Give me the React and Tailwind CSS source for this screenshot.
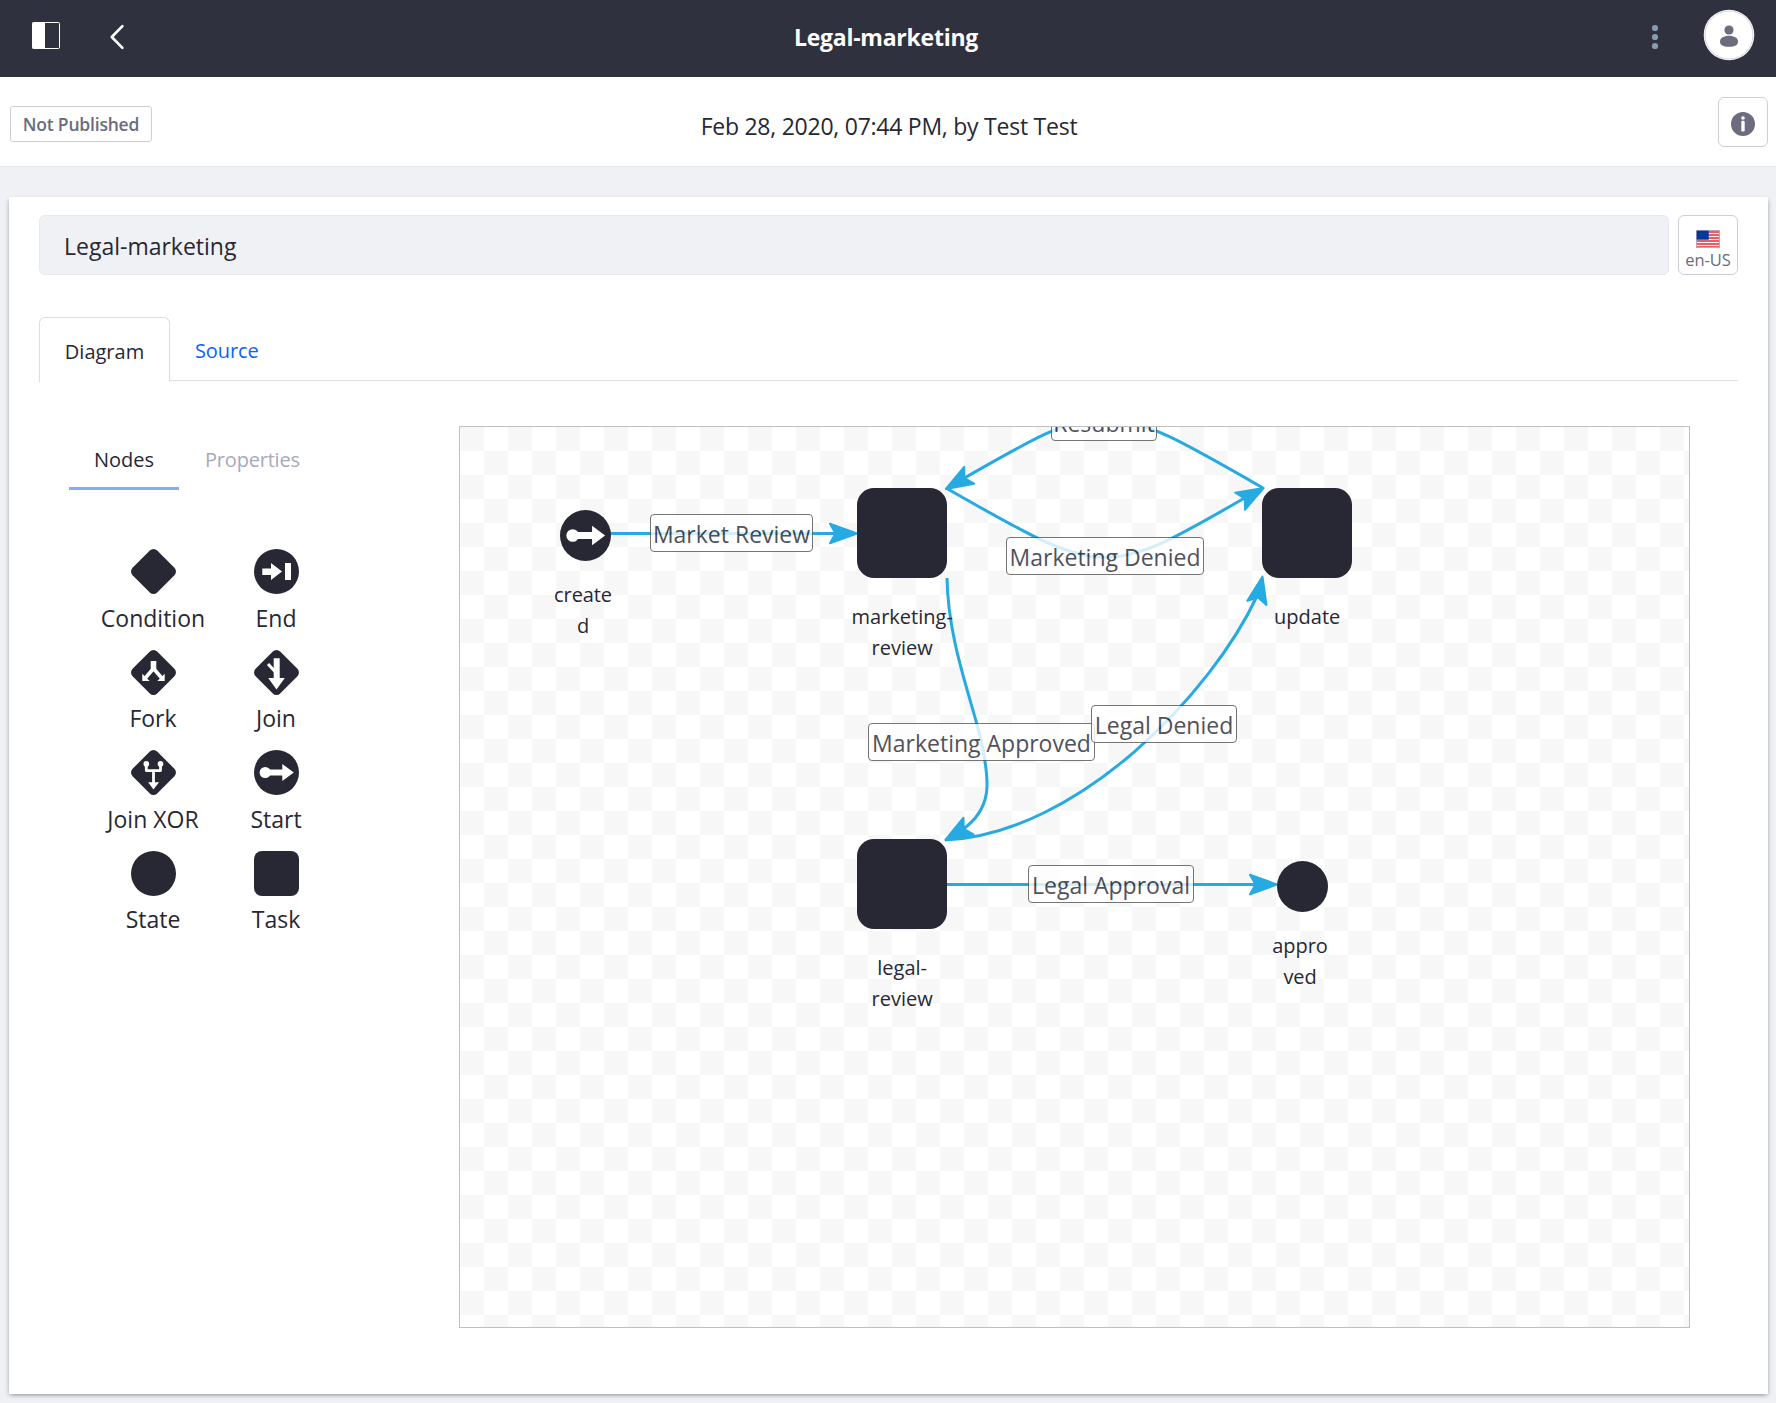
const INK = "#272833";

function Diamond() {
  return (
    <rect x="5.1" y="5.1" width="34.8" height="34.8" rx="5.2" transform="rotate(45 22.5 22.5)" fill={INK} />
  );
}

function Disc() {
  return <circle cx="22.5" cy="22.5" r="22.5" fill={INK} />;
}

function StartGlyph() {
  return (
    <g fill="#fff">
      <circle cx="11.2" cy="22.5" r="5.6" />
      <path d="M14 19.4H28.3V14L39.8 22.5L28.3 31V25.5H14Z" />
    </g>
  );
}

const shapes = {
  condition: <Diamond />,
  end: (
    <>
      <Disc />
      <path fill="#fff" d="M8.3 19.5H17V14L28 22.5L17 31V26H8.3ZM31 14H37V31H31Z" />
    </>
  ),
  fork: (
    <>
      <Diamond />
      <path fill="#fff" d="M19.7 11H25.3V20.2H19.7ZM11.3 23.7V31H18.7ZM33.7 23.7V31H26.3Z" />
      <path d="M22.5 17.5V18.5L14.3 28M22.5 18.5L30.7 28" fill="none" stroke="#fff" strokeWidth="3.6" />
    </>
  ),
  join: (
    <>
      <Diamond />
      <path fill="#fff" d="M19.7 8.3H25.7V28H30.8L22.5 39.4L14.2 28H19.7Z" />
      <path d="M14 14L21.5 22" fill="none" stroke="#fff" strokeWidth="3" />
    </>
  ),
  xor: (
    <>
      <Diamond />
      <circle cx="15.3" cy="13.9" r="2.8" fill="#fff" />
      <circle cx="29.5" cy="13.9" r="2.8" fill="#fff" />
      <path d="M15.3 14V20.6H29.5V14M22.5 20.6V33" fill="none" stroke="#fff" strokeWidth="2.8" strokeLinejoin="round" />
      <path fill="#fff" d="M17.1 32.2H28L22.5 39.5Z" />
    </>
  ),
  start: (
    <>
      <Disc />
      <StartGlyph />
    </>
  ),
  state: <Disc />,
  task: <rect width="45" height="45" rx="8" fill={INK} />,
};

const palette = [
  ["condition", "Condition"],
  ["end", "End"],
  ["fork", "Fork"],
  ["join", "Join"],
  ["xor", "Join XOR"],
  ["start", "Start"],
  ["state", "State"],
  ["task", "Task"],
];

function NavBar() {
  return (
    <nav className="grid h-[77px] grid-cols-[1fr_auto_1fr] items-start bg-[#30313f] pl-[17px] pr-[21px] text-white">
      <div className="flex pl-[15px] pt-[22px]">
        <svg width="28" height="27" viewBox="0 0 28 27">
          <rect x="0.5" y="0.5" width="27" height="26" rx="1" fill="none" stroke="#fff" />
          <path d="M0.5 0.5H13V26.5H0.5Z" fill="#fff" />
        </svg>
        <svg className="ml-[49px] mt-[2px]" width="16" height="26" viewBox="0 0 16 26" fill="none" stroke="#fff" strokeWidth="2.6" strokeLinecap="round" strokeLinejoin="round">
          <path d="M13.4 2.2L2.8 13L13.4 23.8" />
        </svg>
      </div>
      <h1 className="text-[23px] font-bold leading-[74px] tracking-[-0.25px]">Legal-marketing</h1>
      <div className="flex items-start justify-end pt-[9px]">
        <svg className="mr-[44px] mt-[15px]" width="8" height="26" viewBox="0 0 8 26" fill="#869cad">
          <circle cx="4" cy="4" r="3.1" />
          <circle cx="4" cy="13" r="3.1" />
          <circle cx="4" cy="22" r="3.1" />
        </svg>
        <svg width="52" height="52" viewBox="0 0 52 52">
          <circle cx="26" cy="26" r="25.3" fill="#fff" />
          <circle cx="26" cy="26" r="24" fill="none" stroke="#cdced9" strokeWidth="0.9" />
          <circle cx="26" cy="21" r="4.6" fill="#6b6c7e" />
          <path d="M17 32.5C17 29 21 26.8 26 26.8S35 29 35 32.5C35 36.3 32 37.7 26 37.7S17 36.3 17 32.5Z" fill="#6b6c7e" />
        </svg>
      </div>
    </nav>
  );
}

function InfoBar() {
  return (
    <header className="grid h-[90px] grid-cols-[1fr_auto_1fr] items-start border-b border-[#e7e7ed] bg-white pl-[10px] pr-2">
      <div className="mt-[29px] h-[36px] w-[142px] rounded-[3px] border border-[#cdced9] text-center text-[17.5px] font-semibold leading-[35px] tracking-[-0.2px] text-[#6b6c7e]">
        Not Published
      </div>
      <p className="pt-[20px] text-[23px] leading-[58px] tracking-[-0.25px]">Feb 28, 2020, 07:44 PM, by Test Test</p>
      <div className="mt-[20px] flex h-[50px] w-[50px] items-center justify-center justify-self-end rounded-md border border-[#cdced9]">
        <svg className="mt-[4px]" width="24" height="24" viewBox="0 0 24 24">
          <circle cx="12" cy="12" r="12" fill="#6b6c7e" />
          <circle cx="12" cy="6" r="1.8" fill="#fff" />
          <rect x="10.3" y="8.8" width="3.4" height="10.8" rx="1.3" fill="#fff" />
        </svg>
      </div>
    </header>
  );
}

function Flag() {
  return (
    <svg width="24" height="18" viewBox="0 0 24 18">
      <rect width="24" height="18" fill="#f6eef0" />
      <path d="M1 2H23M1 5H23M1 8H23M1 11H23M1 14H23M1 17H23" stroke="#e03238" strokeWidth="1.3" />
      <rect x="0.5" y="0.5" width="23" height="17" fill="none" stroke="#b4a9b4" />
      <rect x="0.7" y="0.7" width="12" height="9" fill="#0038a0" />
    </svg>
  );
}

function Arrow({ x, y, angle }) {
  return (
    <path
      d="M-1 0L-28 -9.8L-22.5 0L-28 9.8Z"
      transform={`translate(${x} ${y}) rotate(${angle})`}
      fill="#27aae1"
      strokeWidth="2"
    />
  );
}

function Connectors() {
  return (
    <svg className="absolute left-0 top-0" width="1229" height="900" viewBox="460 427 1229 900" fill="none" stroke="#27aae1" strokeWidth="3" strokeLinejoin="round">
      <path d="M610 533.5H840" />
      <Arrow x="858" y="533.5" angle="0" />
      <path d="M1263 488C1105 397 1105 397 961 480" />
      <Arrow x="945" y="489.5" angle="149.5" />
      <path d="M946 488C1105 579 1105 579 1248 496" />
      <Arrow x="1264.5" y="487.5" angle="-29.5" />
      <path d="M947 578C948 640 970 694 981 740C990 782 993 808 962 830" />
      <Arrow x="944.5" y="840.5" angle="149" />
      <path d="M945 840C1078 834 1212 693 1257 596" />
      <Arrow x="1262.7" y="575.5" angle="-78" />
      <path d="M946 884.5H1260" />
      <Arrow x="1278" y="884.5" angle="0" />
    </svg>
  );
}

function EdgeLabel({ place, children }) {
  return (
    <div className={`absolute h-[38px] whitespace-nowrap rounded-[4px] border border-[#555] bg-white text-center text-[23px] leading-[39px] opacity-80 ${place}`}>
      {children}
    </div>
  );
}

function TaskNode({ place, lines }) {
  return (
    <div className={`absolute flex w-[90px] flex-col items-center ${place}`}>
      <div className="h-[90px] w-[90px] shrink-0 rounded-[17px] bg-[#272833]" />
      <div className="ml-px mt-[23px] whitespace-nowrap text-center text-[20px] leading-[31.5px]">
        {lines.map((line) => (
          <div key={line}>{line}</div>
        ))}
      </div>
    </div>
  );
}

function StateNode({ place, lines, start }) {
  return (
    <div className={`absolute flex w-[51px] flex-col items-center ${place}`}>
      <svg width="51" height="51" viewBox="0 0 45 45">
        <Disc />
        {start && <StartGlyph />}
      </svg>
      <div className="-ml-[4px] mt-[18px] whitespace-nowrap text-center text-[20px] leading-[31px] tracking-[-0.1px]">
        {lines.map((line) => (
          <div key={line}>{line}</div>
        ))}
      </div>
    </div>
  );
}

function Canvas() {
  return (
    <div className="relative h-[902px] w-[1231px] overflow-hidden border border-[#c0c0c0] bg-white bg-[conic-gradient(#fff_25%,#f7f7f7_0_50%,#fff_0_75%,#f7f7f7_0)] bg-[size:48px_48px]">
      <Connectors />
      <StateNode place="left-[99.5px] top-[82.5px]" lines={["create", "d"]} start />
      <TaskNode place="left-[396.7px] top-[60.7px]" lines={["marketing-", "review"]} />
      <TaskNode place="left-[801.7px] top-[60.7px]" lines={["update"]} />
      <TaskNode place="left-[396.7px] top-[411.7px]" lines={["legal-", "review"]} />
      <StateNode place="left-[816.5px] top-[433.5px]" lines={["appro", "ved"]} />
      <EdgeLabel place="left-[190px] top-[87px] w-[163px]">Market Review</EdgeLabel>
      <EdgeLabel place="left-[591px] top-[-24px] w-[106px]">Resubmit</EdgeLabel>
      <EdgeLabel place="left-[546px] top-[110px] w-[198px]">Marketing Denied</EdgeLabel>
      <EdgeLabel place="left-[408px] top-[296px] w-[227px]">Marketing Approved</EdgeLabel>
      <EdgeLabel place="left-[631px] top-[278px] w-[146px]">Legal Denied</EdgeLabel>
      <EdgeLabel place="left-[568px] top-[438px] w-[166px]">Legal Approval</EdgeLabel>
    </div>
  );
}

function Palette() {
  return (
    <aside className="w-[420px] shrink-0 pt-[11px]">
      <div className="ml-[30px] flex text-[20px] leading-[46px]">
        <div className="h-[53px] w-[110px] border-b-[3px] border-[#80acff] text-center">Nodes</div>
        <div className="pl-[26px] tracking-[-0.2px] text-[#a7a9bc]">Properties</div>
      </div>
      <div className="ml-[53px] mt-[59px] grid w-[246px] auto-rows-[100.5px] grid-cols-[123px_123px]">
        {palette.map(([shape, label]) => (
          <div key={shape} className="flex flex-col items-center">
            <svg className="shrink-0" width="45" height="45" viewBox="0 0 45 45">
              {shapes[shape]}
            </svg>
            <span className="-ml-px mt-[5.5px] text-[23px] leading-[36px]">{label}</span>
          </div>
        ))}
      </div>
    </aside>
  );
}

export default function App() {
  return (
    <div className="h-[1403px] w-[1776px] overflow-hidden bg-[#f0f1f5] font-['Open_Sans','Noto_Sans',sans-serif] text-[#272833]">
      <NavBar />
      <InfoBar />
      <main className="ml-[9px] mr-2 mt-[30px] h-[1197px] bg-white px-[30px] pt-[18px] shadow-[0_1.5px_5px_-1px_rgba(0,0,0,0.5)]">
        <div className="flex gap-[9px]">
          <div className="h-[60px] w-[1630px] rounded-md border border-[#e7e7ed] bg-[#f0f1f5] pl-[24px] text-[23px] leading-[61px]">
            Legal-marketing
          </div>
          <div className="flex h-[60px] w-[60px] flex-col items-center rounded-md border border-[#cdced9] pt-[14px]">
            <Flag />
            <span className="text-[16.5px] leading-[23px] tracking-[-0.1px] text-[#6b6c7e]">en-US</span>
          </div>
        </div>
        <div className="mt-[42px] flex h-[64px] border-b border-[#dddddf] text-[20px]">
          <div className="h-[65px] w-[131px] shrink-0 rounded-t-md border border-b-0 border-[#dddddf] bg-white pt-[9px] text-center leading-[50px]">
            Diagram
          </div>
          <div className="pl-[25px] pt-[9px] leading-[50px] tracking-[-0.1px] text-[#0b5fff]">Source</div>
        </div>
        <div className="mt-[45px] flex">
          <Palette />
          <Canvas />
        </div>
      </main>
    </div>
  );
}
